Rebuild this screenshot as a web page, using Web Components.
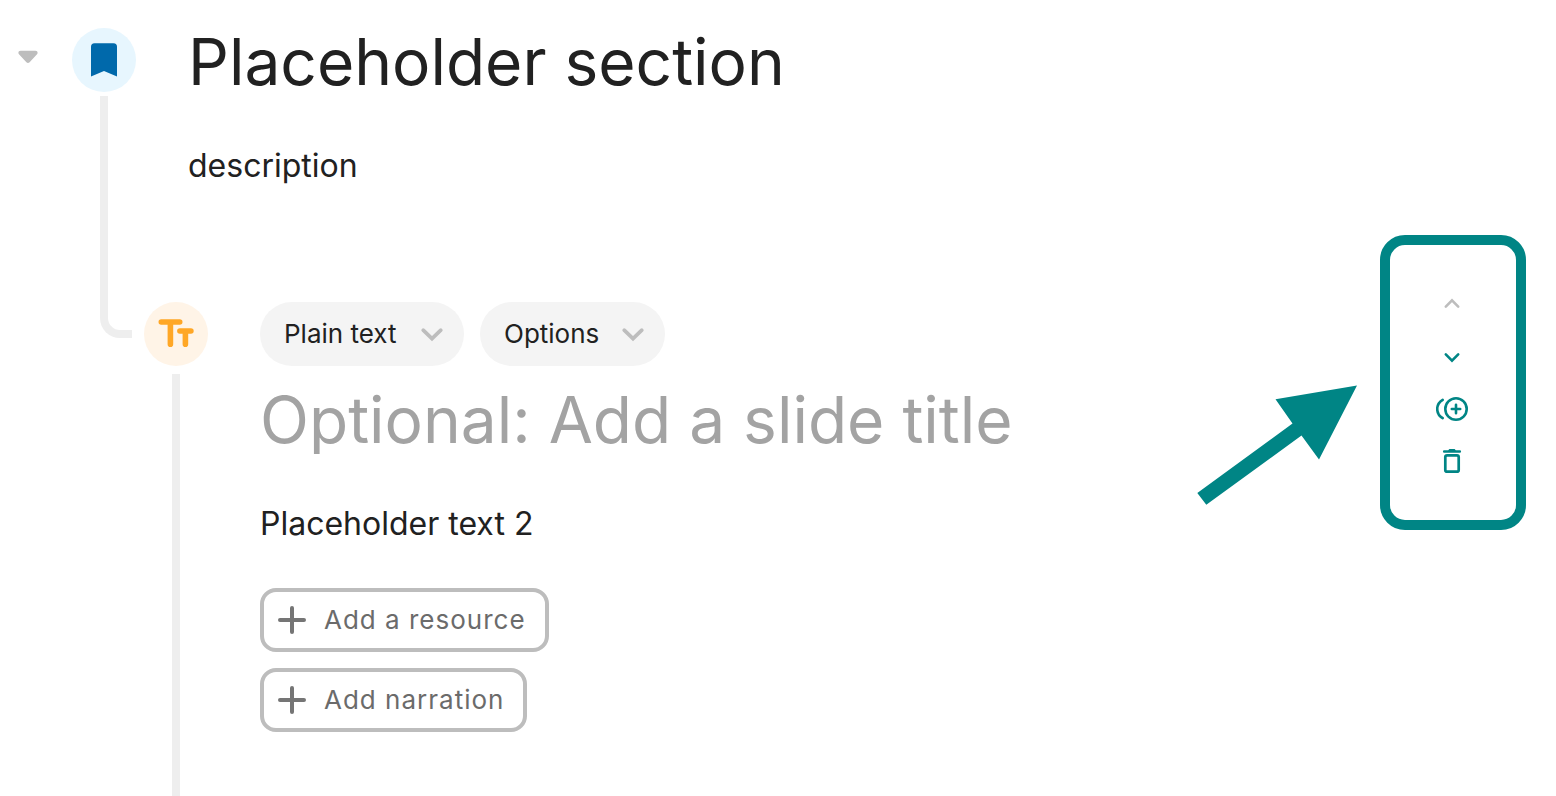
<!DOCTYPE html>
<html lang="en">
<head>
<meta charset="utf-8">
<meta name="viewport" content="width=device-width, initial-scale=1">
<title>Lesson outline</title>
<style>
  body { margin: 0; background: #fff; color: #212121; font-family: Inter, "Liberation Sans", sans-serif; }
</style>
</head>
<body>
<lesson-outline>
  <outline-section>
    <span slot="title">Placeholder section</span>
    <span slot="description">description</span>
  </outline-section>
  <outline-slide>
    <type-select slot="settings"></type-select>
    <menu-chip slot="settings">Options</menu-chip>
    <span slot="text">Placeholder text 2</span>
    <add-button slot="actions">Add a resource</add-button>
    <add-button slot="actions">Add narration</add-button>
    <pointer-arrow slot="aside"></pointer-arrow>
    <slide-toolbar slot="aside"></slide-toolbar>
  </outline-slide>
</lesson-outline>
<script>
const define = (name, html) => {
  const template = document.createElement('template');
  template.innerHTML = html;
  customElements.define(name, class extends HTMLElement {
    constructor() {
      super();
      this.attachShadow({ mode: 'open' }).append(template.content.cloneNode(true));
    }
  });
};

define('lesson-outline', `
<style>
  :host { display: flex; flex-direction: column; min-height: 100vh; box-sizing: border-box; padding-top: 28px; }
</style>
<slot></slot>`);

define('round-badge', `
<style>
  :host { display: flex; align-items: center; justify-content: center; width: 64px; height: 64px; border-radius: 50%; flex: none; }
</style>
<slot></slot>`);

define('outline-section', `
<style>
  :host { display: flex; }
  .toggle { flex: none; width: 56px; height: 58px; padding: 0; border: 0; background: none; margin-right: 16px; }
  svg { display: block; }
  .toggle svg { margin: 0 auto; }
  .rail { width: 64px; margin-right: 52px; flex: none; display: flex; flex-direction: column; gap: 4px; }
  round-badge { background: #e7f6fe; }
  .line { flex: 1; box-sizing: border-box; width: 32px; margin-left: 28px; border: solid #eee; border-width: 0 0 8px 8px; border-bottom-left-radius: 20px; }
  .body { flex: 1; min-width: 0; padding-bottom: 150px; }
  h1 { margin: 0 0 48px; font-size: 64px; line-height: 68px; font-weight: 400; }
  p { margin: 0; font-size: 32px; line-height: 44px; }
</style>
<button class="toggle" type="button" aria-label="Collapse section" aria-expanded="true">
  <svg width="20" height="14" viewBox="0 0 20 14"><path d="M2.600.8h14.800c2.200 0 2.900 2.200 1.400 3.800l-7.200 7.600c-1 1.100-2.200 1.100-3.200 0L1.200 4.600C-.3 3 .4.800 2.600.8z" fill="#bdbdbd"/></svg>
</button>
<div class="rail">
  <round-badge><svg width="26" height="34" viewBox="0 0 26 34"><path d="M3.500.300h19a3.500 3.500 0 0 1 3.500 3.500v29.700l-13-5.500-13 5.500V3.800a3.500 3.500 0 0 1 3.500-3.500z" fill="#0069ab"/></svg></round-badge>
  <div class="line"></div>
</div>
<div class="body">
  <h1><slot name="title"></slot></h1>
  <p><slot name="description"></slot></p>
</div>`);

define('outline-slide', `
<style>
  /* The slide starts beside the foot of the section's connector. */
  :host { display: flex; flex: 1; margin-top: -36px; padding-left: 144px; padding-right: 30px; }
  .rail { width: 64px; margin-right: 52px; flex: none; display: flex; flex-direction: column; align-items: center; gap: 8px; }
  round-badge { background: #fff4e7; }
  svg { display: block; }
  .line { flex: 1; width: 8px; background: #eee; }
  .body { flex: 1; min-width: 0; }
  .settings { display: flex; gap: 16px; margin-bottom: 20px; }
  input { display: block; width: 100%; box-sizing: border-box; height: 68px; margin: 0 0 48px; padding: 0; border: 0; background: none; outline: 0; font: 400 64px/68px Inter, "Liberation Sans", sans-serif; color: inherit; }
  input::placeholder { color: #a3a3a3; opacity: 1; }
  p { margin: 0 0 42px; font-size: 32px; line-height: 44px; }
  .actions { display: flex; flex-direction: column; align-items: flex-start; gap: 16px; }
  /* The callout reaches above the slide's first row. */
  .aside { display: flex; align-items: flex-start; gap: 23px; margin-top: -67px; flex: none; }
</style>
<div class="rail">
  <round-badge><svg width="36" height="30" viewBox="0 0 36 30" fill="none" stroke="#ffa726" stroke-width="5.600" stroke-linecap="round"><path d="M3.300 3h18.400M12.400 3.500v21.700"/><path d="M21.900 12h11M27.400 12.500v12.700"/></svg></round-badge>
  <div class="line"></div>
</div>
<div class="body">
  <div class="settings"><slot name="settings"></slot></div>
  <input type="text" aria-label="Slide title" placeholder="Optional: Add a slide title">
  <p><slot name="text"></slot></p>
  <div class="actions"><slot name="actions"></slot></div>
</div>
<div class="aside"><slot name="aside"></slot></div>`);

define('type-select', `
<style>
  :host { display: grid; height: 64px; border-radius: 32px; background: #f4f4f4; align-items: center; }
  select { grid-area: 1 / 1; appearance: none; border: 0; outline: 0; background: none; margin: 0; height: 64px; padding: 0 67px 0 24px; font: 400 26px/32px Inter, "Liberation Sans", sans-serif; color: #212121; }
  svg { grid-area: 1 / 1; justify-self: end; margin-right: 20px; pointer-events: none; }
</style>
<select aria-label="Slide type"><option>Plain text</option></select>
<svg width="24" height="16" viewBox="0 0 24 16"><path d="M3.200 4.200l8.800 8.400 8.800-8.400" fill="none" stroke="#bdbdbd" stroke-width="3.700" stroke-linecap="round"/></svg>`);

define('menu-chip', `
<style>
  :host { display: block; }
  button { display: flex; align-items: center; gap: 22px; height: 64px; padding: 0 20px 0 24px; border: 0; border-radius: 32px; background: #f4f4f4; font: 400 26px/32px Inter, "Liberation Sans", sans-serif; color: #212121; }
</style>
<button type="button" aria-haspopup="menu"><slot></slot>
<svg width="24" height="16" viewBox="0 0 24 16"><path d="M3.200 4.200l8.800 8.400 8.800-8.400" fill="none" stroke="#bdbdbd" stroke-width="3.700" stroke-linecap="round"/></svg></button>`);

define('add-button', `
<style>
  :host { display: block; }
  button { display: flex; align-items: center; gap: 18px; height: 64px; padding: 0 19px 0 14px; border: 4px solid #bdbdbd; border-radius: 16px; background: #fff; font: 400 26px/32px Inter, "Liberation Sans", sans-serif; letter-spacing: 1px; color: #6b6b6b; }
</style>
<button type="button"><svg width="28" height="28" viewBox="0 0 28 28"><path d="M2 14h24M14 2v24" fill="none" stroke="#757575" stroke-width="4" stroke-linecap="round"/></svg><slot></slot></button>`);

define('pointer-arrow', `
<style>
  :host { display: block; margin-top: 150px; }
  svg { display: block; }
</style>
<svg width="160" height="120" viewBox="0 0 160 120" aria-hidden="true"><path d="M.3 108L95.500 38.500 78.500 14.300 160 .500 122 74.500 104.500 50.500 9.300 119.700z" fill="#008585"/></svg>`);

define('slide-toolbar', `
<style>
  :host { display: block; }
  div { border: 10px solid #008585; border-radius: 25px; padding: 34px 38px 33px 36px; display: flex; flex-direction: column; }
  button { display: flex; align-items: center; justify-content: center; width: 52px; height: 52px; padding: 0; border: 0; background: none; color: #008585; }
  button:disabled { color: #bdbdbd; }
  svg { display: block; fill: none; stroke: currentColor; stroke-linecap: round; stroke-linejoin: round; }
</style>
<div role="toolbar" aria-label="Slide actions">
  <button type="button" aria-label="Move up" disabled><svg width="32" height="32" viewBox="0 0 32 32"><path d="M9.800 17.600L16 11.400l6.200 6.200" stroke-width="2.600" stroke-linejoin="miter"/></svg></button>
  <button type="button" aria-label="Move down"><svg width="32" height="32" viewBox="0 0 32 32"><path d="M9.800 13.400l6.200 6.200 6.200-6.200" stroke-width="2.600" stroke-linejoin="miter"/></svg></button>
  <button type="button" aria-label="Duplicate"><svg width="32" height="32" viewBox="0 0 32 32" stroke-width="2.600"><circle cx="20" cy="16" r="10.700"/><path d="M20 11.800v8.400M15.800 16h8.400"/><path d="M6.700 6.800C-.6 11.200-.6 20.800 6.700 25.200"/></svg></button>
  <button type="button" aria-label="Delete"><svg width="32" height="32" viewBox="0 0 32 32"><rect x="9.300" y="10.300" width="13.400" height="16.400" rx="1.800" stroke-width="2.700"/><path d="M8.200 5.200h4l1.200-1.200h5.200l1.200 1.200h4a1.300 1.300 0 0 1 0 2.600H8.200a1.300 1.300 0 0 1 0-2.600z" fill="currentColor" stroke="none"/></svg></button>
</div>`);
</script>
</body>
</html>
